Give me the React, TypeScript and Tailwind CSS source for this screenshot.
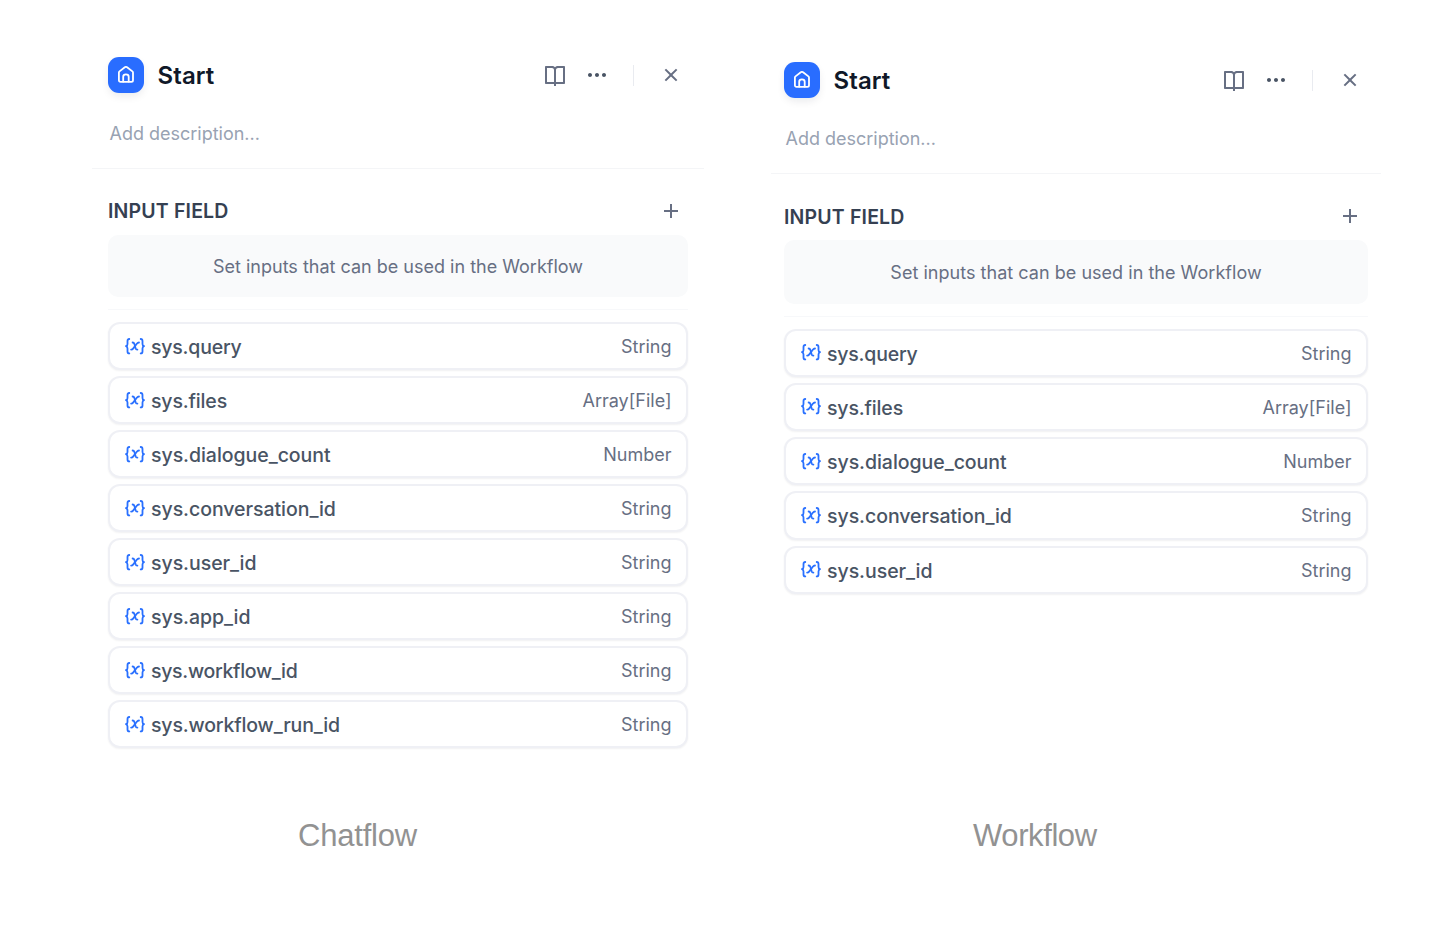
import { RiAddLine, RiBookOpenLine, RiCloseLine, RiMoreFill } from 'react-icons/ri';

type Variable = { name: string; type: string; nameClass?: string };

const workflowVariables: Variable[] = [
  { name: 'sys.query', type: 'String', nameClass: 'tracking-[-0.2px]' },
  { name: 'sys.files', type: 'Array[File]', nameClass: 'tracking-[-0.15px]' },
  { name: 'sys.dialogue_count', type: 'Number' },
  { name: 'sys.conversation_id', type: 'String' },
  { name: 'sys.user_id', type: 'String' },
];

const chatflowVariables: Variable[] = [
  ...workflowVariables,
  { name: 'sys.app_id', type: 'String' },
  { name: 'sys.workflow_id', type: 'String', nameClass: 'tracking-[-0.3px]' },
  { name: 'sys.workflow_run_id', type: 'String', nameClass: 'tracking-[-0.15px]' },
];

function HomeIcon() {
  return (
    <svg viewBox="0 0 18 18" className="size-[18px]" fill="none" stroke="white" strokeWidth="1.8" strokeLinecap="round" strokeLinejoin="round">
      <path d="M1.900 6.600c0-.5.2-.9.600-1.200l5.300-4.100c.7-.5 1.600-.5 2.300 0l5.300 4.100c.4.300.6.700.6 1.200v7.600c0 1-.6 1.600-1.600 1.600H3.500c-1 0-1.600-.6-1.600-1.600z" />
      <path d="M6.200 15.600v-4.800c0-1.500 1-2.400 2.750-2.400s2.750.9 2.750 2.400v4.800" />
    </svg>
  );
}

function VariableIcon() {
  return (
    <svg viewBox="0 0 20 17" className="h-[17px] w-5 shrink-0" fill="none" stroke="#2970ff" strokeWidth="1.800" strokeLinecap="round" strokeLinejoin="round">
      <path d="M4.300 1C2.900 1 2.500 1.700 2.500 3v2.900c0 1.200-.5 1.900-1.500 2.300 1 .4 1.500 1.100 1.500 2.300v2.900c0 1.300.4 2 1.800 2" />
      <path d="M15.700 1c1.400 0 1.800.7 1.800 2v2.900c0 1.200.5 1.900 1.500 2.300-1 .4-1.500 1.100-1.500 2.300v2.900c0 1.300-.4 2-1.800 2" />
      <path d="M7.600 4.500c1.100 0 1.500.4 1.800 1.400l1.200 4.400c.3 1 .7 1.400 1.800 1.300" />
      <path d="M14 4.500c-1 0-1.500.3-2.200 1.200l-3.500 4.700c-.7.900-1.200 1.200-2.200 1.200" />
    </svg>
  );
}

function Header({ actionsClass }: { actionsClass: string }) {
  return (
    <div className="flex h-9 items-center">
      <div className="flex size-9 items-center justify-center rounded-[11px] bg-[#296dff] shadow-[0_4px_8px_-1px_rgba(16,24,40,0.09)]">
        <HomeIcon />
      </div>
      <h2 className="mt-0.5 ml-[13.500px] text-[24px] leading-9 font-semibold tracking-[0.1px] text-[#101828]">Start</h2>
      <div className={`ml-auto flex items-center text-[#676f83] ${actionsClass}`}>
        <RiBookOpenLine className="size-6" />
        <RiMoreFill className="ml-[18px] size-6 text-[#495464]" />
        <span className="ml-6 h-[21px] w-px bg-[#e9ebf0]" />
        <RiCloseLine className="ml-[25px] size-6" />
      </div>
    </div>
  );
}

function VariableRow({ variable, rowClass }: { variable: Variable; rowClass: string }) {
  return (
    <li className={`flex items-center rounded-[12px] border-2 border-[#eff0f5] bg-white pr-[14.500px] pl-[15px] shadow-[0_1px_2px_rgba(16,24,40,0.06)] ${rowClass}`}>
      <VariableIcon />
      <span className={`mt-0.5 ml-[6px] text-[19.500px] leading-6 font-medium text-[#495464] ${variable.nameClass ?? 'tracking-[-0.040px]'}`}>{variable.name}</span>
      <span className="mt-0.5 ml-auto text-[18px] leading-6 text-[#676f83]">{variable.type}</span>
    </li>
  );
}

type PanelProps = {
  variables: Variable[];
  className: string;
  insetClass: string;
  actionsClass: string;
  titleClass: string;
  hintClass: string;
  rowClass: string;
};

function StartPanel({ variables, className, insetClass, actionsClass, titleClass, hintClass, rowClass }: PanelProps) {
  return (
    <section className={className}>
      <div className={insetClass}>
        <Header actionsClass={actionsClass} />
        <p className="mt-[29px] ml-[1.500px] h-6 text-[18px] leading-6 tracking-[-0.010px] text-[#98a2b2]">Add description...</p>
      </div>
      <div className="mt-[22px] h-px bg-[#f4f5f7]" />
      <div className={insetClass}>
        <div className="mt-[30px] flex h-6 items-center justify-between">
          <h3 className={`text-[19.500px] leading-6 font-semibold tracking-[0.170px] text-[#354052] ${titleClass}`}>INPUT FIELD</h3>
          <RiAddLine className={`size-6 text-[#676f83] ${actionsClass}`} />
        </div>
        <div className={`mt-3 flex items-center justify-center rounded-[10px] bg-[#f9fafb] text-[18px] text-[#676f83] ${hintClass}`}>
          Set inputs that can be used in the Workflow
        </div>
        <div className="mt-3 h-px bg-[#f7f8fa]" />
        <ul className="mt-3 flex flex-col gap-[6px]">
          {variables.map((variable) => (
            <VariableRow key={variable.name} variable={variable} rowClass={rowClass} />
          ))}
        </ul>
      </div>
    </section>
  );
}

export default function App() {
  return (
    <main className="flex h-[928px] w-[1444px] flex-col overflow-hidden bg-white font-[Inter,sans-serif]">
      <div className="flex h-[816px] items-start">
        <StartPanel
          variables={chatflowVariables}
          className="mt-[57px] ml-[92px] w-[612px]"
          insetClass="ml-4 w-[580px]"
          actionsClass="mr-[5px]"
          titleClass="pt-0"
          hintClass="h-[62px]"
          rowClass="h-[48px]"
        />
        <StartPanel
          variables={workflowVariables}
          className="mt-[62px] ml-[67px] w-[610px]"
          insetClass="ml-[13px] w-[584px]"
          actionsClass="mr-[6px]"
          titleClass="pt-0.5"
          hintClass="h-[63.500px] pt-px tracking-[0.030px]"
          rowClass="h-[48.250px]"
        />
      </div>
      <div className="flex font-['Liberation_Sans',sans-serif] text-[31px] leading-10 text-[#929292]">
        <span className="ml-[298px] w-[675px] tracking-[-0.2px]">Chatflow</span>
        <span className="tracking-[-0.4px]">Workflow</span>
      </div>
    </main>
  );
}
